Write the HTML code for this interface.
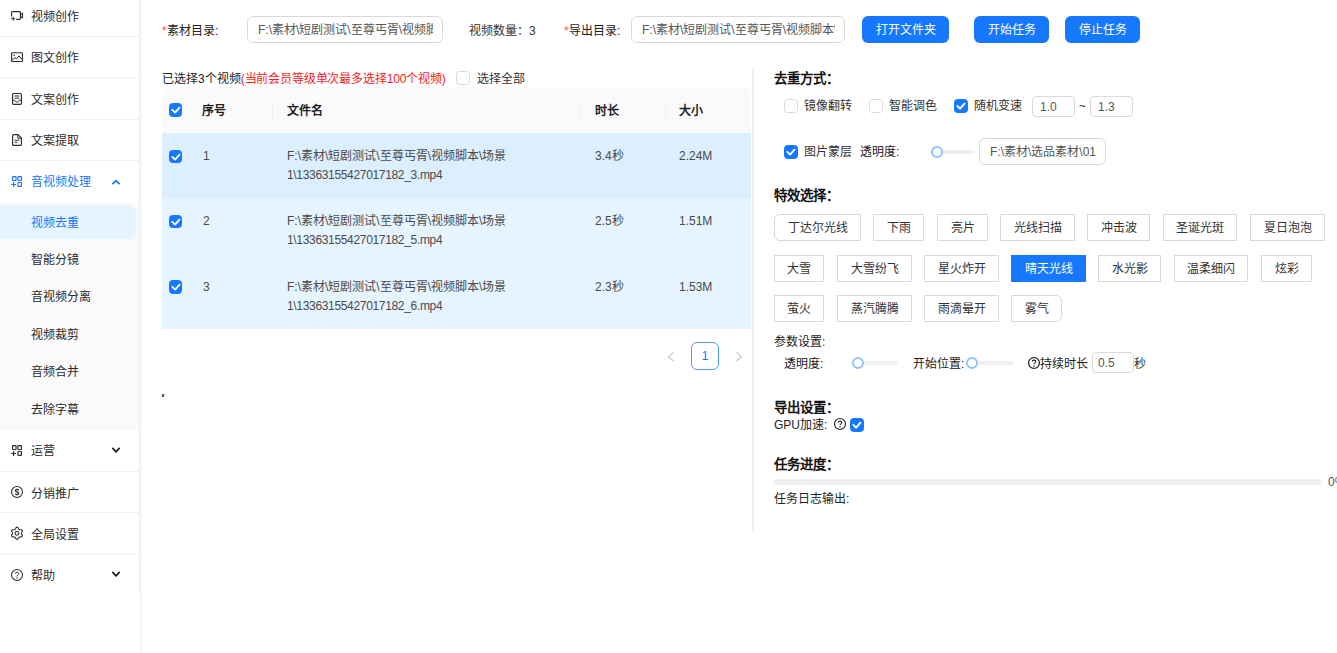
<!DOCTYPE html>
<html lang="zh-CN">
<head>
<meta charset="utf-8">
<title>视频去重</title>
<style>
*{box-sizing:border-box;margin:0;padding:0}
html,body{width:1337px;height:653px;overflow:hidden;background:#fff}
body{position:relative;font-family:"Liberation Sans",sans-serif;font-size:12px;color:#333;line-height:20px}
.a{position:absolute;white-space:nowrap}
/* sidebar */
#side{position:absolute;left:0;top:0;width:142px;height:653px;background:#fff;border-right:2px solid #f6f6f6}
#menu{position:absolute;left:0;top:0;width:140px;height:595px;border-right:1px solid #efefef}
.hl{position:absolute;left:0;width:139px;height:1px;background:#f0f0f0}
.mi{position:absolute;left:31px;height:20px;line-height:20px;font-size:12px;color:#2b2b2b;white-space:nowrap}
.ic{position:absolute;left:10px;width:14px;height:14px}
.sub{position:absolute;left:0;top:202px;width:139px;height:228px;background:#fafafa}
.sel{position:absolute;left:-8px;top:205px;width:144px;height:34px;border-radius:8px;background:#e6f4ff}
.blue{color:#1677ff}
/* inputs */
.inp{position:absolute;border:1px solid #d9d9d9;border-radius:6px;background:#fff;color:#555;font-size:12px;overflow:hidden;white-space:nowrap}
.clip{display:block;overflow:hidden;white-space:nowrap;height:100%}
.btn{position:absolute;background:#1677ff;color:#fff;border-radius:6px;text-align:center;font-size:12px;top:16px;height:27px;line-height:29px}
.cb{position:absolute;width:13.5px;height:13.5px;border:1px solid #d9d9d9;border-radius:3.5px;background:#fff}
.cb svg{position:absolute;left:-1px;top:-1px;width:13.5px;height:13.5px}
.cb.on{background:#1677ff;border-color:#1677ff}
.red{color:#ff1a1a}
/* table */
#thead{position:absolute;left:162px;top:87px;width:589px;height:46px;background:#fafafa;border-radius:8px 8px 0 0}
.row{position:absolute;left:162px;width:589px;background:#e6f4ff}
.th{position:absolute;top:101px;height:20px;line-height:20px;font-weight:bold;color:#1f1f1f;font-size:12px}
.vs{position:absolute;top:101px;width:1px;height:18px;background:#f0f0f0}
.td{position:absolute;height:19px;line-height:19px;color:#4a4a4a;font-size:12px;white-space:nowrap}
.h1{position:absolute;left:774px;font-family:"Liberation Serif",serif;font-weight:bold;font-size:13.4px;line-height:20px;color:#111;white-space:nowrap;height:20px}
.tb{position:absolute;border:1px solid #d9d9d9;background:#fff;height:27px;line-height:27px;text-align:center;font-size:12px;color:#333;white-space:nowrap}
.tb.on{background:#1677ff;border-color:#1677ff;color:#fff}
.lbl{position:absolute;height:20px;line-height:20px;font-size:12px;color:#1a1a1a;white-space:nowrap}
.rail{position:absolute;height:4px;border-radius:2px;background:#f0f0f0}
.knob{position:absolute;width:12px;height:12px;border-radius:50%;background:#fff;border:2px solid #8fc3ff}
</style>
</head>
<body>

<!-- ============ SIDEBAR ============ -->
<div id="side">
 <div id="menu">
  <div class="hl" style="top:36px"></div>
  <div class="hl" style="top:77px"></div>
  <div class="hl" style="top:119px"></div>
  <div class="hl" style="top:160px"></div>
  <div class="sub"></div>
  <div class="sel"></div>
  <div class="hl" style="top:471px"></div>
  <div class="hl" style="top:512px"></div>
  <div class="hl" style="top:554px"></div>


  <!-- icons -->
  <svg class="ic" style="top:9px" viewBox="0 0 14 14" fill="none" stroke="#2e2e2e" stroke-width="1.15"><path d="M1.6 7.6 V3.5 Q1.6 2.6 2.5 2.6 H9.5 Q10.4 2.6 10.4 3.5 V9.5 Q10.4 10.4 9.5 10.4 H6.2"/><path d="M3.2 7.8 V11.6 M1.3 9.7 H5.1" stroke-width="1"/><path d="M10.4 5.6 L12.5 4.4 V8.8 L10.4 7.6"/></svg>
  <svg class="ic" style="top:50px" viewBox="0 0 14 14" fill="none" stroke="#2e2e2e" stroke-width="1.15"><rect x="1.6" y="2.7" width="10.8" height="8.8" rx=".7"/><path d="M2 10.2 L5 7.6 L6.4 8.9 L9 5.9 L12 9.6" stroke-width="1"/><circle cx="4.2" cy="5.3" r=".8" fill="#2e2e2e" stroke="none"/></svg>
  <svg class="ic" style="top:92px" viewBox="0 0 14 14" fill="none" stroke="#2e2e2e" stroke-width="1.15"><rect x="2.6" y="1.5" width="8.8" height="10.8" rx="1"/><path d="M4.6 4 H9.4 M4.6 6.2 H9.4" stroke-width="1"/><path d="M2.6 8.3 H4.4 L7 10.4 L9.6 8.3 H11.4" stroke-width="1"/></svg>
  <svg class="ic" style="top:133px" viewBox="0 0 14 14" fill="none" stroke="#2e2e2e" stroke-width="1.15"><path d="M3.5 1.6 H8 L11.4 5 V11.4 Q11.4 12.4 10.4 12.4 H3.6 Q2.6 12.4 2.6 11.4 V2.6 Q2.6 1.6 3.5 1.6 Z"/><path d="M7.8 1.8 V5.2 H11.2" stroke-width="1"/><path d="M4.6 7.2 H9.4 M4.6 9.2 H7.2" stroke-width="1"/></svg>
  <svg class="ic" style="top:174px" viewBox="0 0 14 14" fill="none" stroke="#1677ff" stroke-width="1.15"><rect x="2.55" y="2.65" width="3.5" height="3.8" rx=".4"/><rect x="7.95" y="2.65" width="3.5" height="3.8" rx=".4"/><rect x="7.95" y="8.5" width="3.5" height="3.9" rx=".4"/><path d="M1.2 10.5 H6 M3.6 8 V13"/></svg>
  <svg class="ic" style="top:443px" viewBox="0 0 14 14" fill="none" stroke="#2e2e2e" stroke-width="1.15"><rect x="2.55" y="2.65" width="3.5" height="3.8" rx=".4"/><rect x="7.95" y="2.65" width="3.5" height="3.8" rx=".4"/><rect x="7.95" y="8.5" width="3.5" height="3.9" rx=".4"/><path d="M1.2 10.5 H6 M3.6 8 V13"/></svg>
  <svg class="ic" style="top:485px" viewBox="0 0 14 14" fill="none" stroke="#2e2e2e" stroke-width="1.1"><circle cx="7" cy="7" r="5.45"/><path d="M8.8 5.5 C8.6 4.1 5.4 4.1 5.4 5.7 C5.4 7.2 8.8 6.8 8.8 8.4 C8.8 9.9 5.4 9.9 5.2 8.5" stroke-width="1.25"/><path d="M7 3.6 V10.4" stroke-width=".5"/></svg>
  <svg class="ic" style="top:526px" viewBox="0 0 14 14" fill="none" stroke="#2e2e2e" stroke-width="1.05" stroke-linejoin="round"><path d="M6.22 1.35 L7.78 1.35 L8.72 3.14 L9.74 3.73 L11.76 3.65 L12.54 5.00 L11.46 6.71 L11.46 7.89 L12.54 9.60 L11.76 10.95 L9.74 10.87 L8.72 11.46 L7.78 13.25 L6.22 13.25 L5.28 11.46 L4.26 10.87 L2.24 10.95 L1.46 9.60 L2.54 7.89 L2.54 6.71 L1.46 5.00 L2.24 3.65 L4.26 3.73 L5.28 3.14 Z"/><circle cx="7" cy="7.3" r="1.9"/></svg>
  <svg class="ic" style="top:568px" viewBox="0 0 14 14" fill="none" stroke="#2e2e2e" stroke-width="1.1"><circle cx="7" cy="7" r="5.45"/><path d="M5.3 5.7 C5.3 3.7 8.7 3.7 8.7 5.7 C8.7 6.9 7 6.9 7 8.4" stroke-width="1"/><circle cx="7" cy="10" r=".7" fill="#2e2e2e" stroke="none"/></svg>
  <!-- chevrons -->
  <svg class="a" style="left:110px;top:176px" width="12" height="12" viewBox="0 0 12 12"><path d="M2.8 7.6 L6 4.7 L9.2 7.6" fill="none" stroke="#1677ff" stroke-width="1.7" stroke-linecap="round" stroke-linejoin="round"/></svg>
  <svg class="a" style="left:110px;top:444px" width="12" height="12" viewBox="0 0 12 12"><path d="M2.8 4.4 L6 7.8 L9.2 4.4" fill="none" stroke="#222" stroke-width="1.7" stroke-linecap="round" stroke-linejoin="round"/></svg>
  <svg class="a" style="left:110px;top:568px" width="12" height="12" viewBox="0 0 12 12"><path d="M2.8 4.4 L6 7.8 L9.2 4.4" fill="none" stroke="#222" stroke-width="1.7" stroke-linecap="round" stroke-linejoin="round"/></svg>
  <div class="mi" style="top:7px">视频创作</div>
  <div class="mi" style="top:48px">图文创作</div>
  <div class="mi" style="top:90px">文案创作</div>
  <div class="mi" style="top:131px">文案提取</div>
  <div class="mi blue" style="top:172px">音视频处理</div>
  <div class="mi blue" style="top:213px">视频去重</div>
  <div class="mi" style="top:250px">智能分镜</div>
  <div class="mi" style="top:287px">音视频分离</div>
  <div class="mi" style="top:325px">视频裁剪</div>
  <div class="mi" style="top:362px">音频合并</div>
  <div class="mi" style="top:400px">去除字幕</div>
  <div class="mi" style="top:441px">运营</div>
  <div class="mi" style="top:484px">分销推广</div>
  <div class="mi" style="top:525px">全局设置</div>
  <div class="mi" style="top:566px">帮助</div>
 </div>
</div>

<!-- ============ TOP BAR ============ -->
<div class="a" style="left:162px;top:21px;line-height:20px;color:#ff4d4f">*</div>
<div class="a" style="left:167px;top:21px;line-height:20px;color:#222">素材目录:</div>
<div class="inp" style="left:247px;top:16px;width:196px;height:27px;line-height:27px;padding:0 9px 0 10px"><span class="clip">F:\素材\短剧测试\至尊丐胥\视频脚本\场景1</span></div>
<div class="a" style="left:469px;top:21px;line-height:20px;color:#333">视频数量：3</div>
<div class="a" style="left:564px;top:21px;line-height:20px;color:#ff4d4f">*</div>
<div class="a" style="left:569px;top:21px;line-height:20px;color:#222">导出目录:</div>
<div class="inp" style="left:631px;top:16px;width:214px;height:27px;line-height:27px;padding:0 9px 0 10px"><span class="clip">F:\素材\短剧测试\至尊丐胥\视频脚本\场景1</span></div>
<div class="btn" style="left:862px;width:87px">打开文件夹</div>
<div class="btn" style="left:974px;width:75px">开始任务</div>
<div class="btn" style="left:1065px;width:75px">停止任务</div>

<!-- selection line -->
<div class="a" style="left:162px;top:69px;line-height:20px;color:#222">已选择3个视频<span class="red" style="letter-spacing:-0.15px">(当前会员等级单次最多选择100个视频)</span></div>
<div class="cb" style="left:456px;top:71px"></div>
<div class="a" style="left:477px;top:69px;line-height:20px;color:#333">选择全部</div>

<!-- ============ TABLE ============ -->
<div id="thead"></div>
<div class="row" style="top:133px;height:65px;background:#dcefff"></div>
<div class="row" style="top:198px;height:66px"></div>
<div class="row" style="top:264px;height:65px"></div>

<div class="cb on" style="left:168.5px;top:103px"><svg viewBox="0 0 13.5 13.5"><path d="M3.3 6.9 L6.1 9.6 L10.5 4.7" fill="none" stroke="#fff" stroke-width="1.9" stroke-linecap="round" stroke-linejoin="round"/></svg></div>
<div class="th" style="left:202px">序号</div>
<div class="vs" style="left:272px"></div>
<div class="th" style="left:287px">文件名</div>
<div class="vs" style="left:580px"></div>
<div class="th" style="left:595px">时长</div>
<div class="vs" style="left:665px"></div>
<div class="th" style="left:679px">大小</div>

<div class="cb on" style="left:168.5px;top:149.5px"><svg viewBox="0 0 13.5 13.5"><path d="M3.3 6.9 L6.1 9.6 L10.5 4.7" fill="none" stroke="#fff" stroke-width="1.9" stroke-linecap="round" stroke-linejoin="round"/></svg></div>
<div class="td" style="left:203px;top:147px">1</div>
<div class="td" style="left:287px;top:147px">F:\素材\短剧测试\至尊丐胥\视频脚本\场景</div>
<div class="td" style="left:287px;top:166px;letter-spacing:-0.33px">1\13363155427017182_3.mp4</div>
<div class="td" style="left:595px;top:147px">3.4秒</div>
<div class="td" style="left:679px;top:147px">2.24M</div>

<div class="cb on" style="left:168.5px;top:214.8px"><svg viewBox="0 0 13.5 13.5"><path d="M3.3 6.9 L6.1 9.6 L10.5 4.7" fill="none" stroke="#fff" stroke-width="1.9" stroke-linecap="round" stroke-linejoin="round"/></svg></div>
<div class="td" style="left:203px;top:212px">2</div>
<div class="td" style="left:287px;top:212px">F:\素材\短剧测试\至尊丐胥\视频脚本\场景</div>
<div class="td" style="left:287px;top:231px;letter-spacing:-0.33px">1\13363155427017182_5.mp4</div>
<div class="td" style="left:595px;top:212px">2.5秒</div>
<div class="td" style="left:679px;top:212px">1.51M</div>

<div class="cb on" style="left:168.5px;top:280px"><svg viewBox="0 0 13.5 13.5"><path d="M3.3 6.9 L6.1 9.6 L10.5 4.7" fill="none" stroke="#fff" stroke-width="1.9" stroke-linecap="round" stroke-linejoin="round"/></svg></div>
<div class="td" style="left:203px;top:278px">3</div>
<div class="td" style="left:287px;top:278px">F:\素材\短剧测试\至尊丐胥\视频脚本\场景</div>
<div class="td" style="left:287px;top:297px;letter-spacing:-0.33px">1\13363155427017182_6.mp4</div>
<div class="td" style="left:595px;top:278px">2.3秒</div>
<div class="td" style="left:679px;top:278px">1.53M</div>

<!-- pagination -->
<div class="a" style="left:691px;top:342px;width:28px;height:28px;border:1px solid #4d97ff;border-radius:6px;text-align:center;line-height:26px;color:#1677ff;font-size:12px">1</div>
<svg class="a" style="left:666px;top:350px" width="10" height="13" viewBox="0 0 10 13"><path d="M7.5 2.5 L2.5 6.7 L7.5 11" fill="none" stroke="#c4c4c4" stroke-width="1.1"/></svg>
<svg class="a" style="left:734px;top:350px" width="10" height="13" viewBox="0 0 10 13"><path d="M2.5 2.5 L7.5 6.7 L2.5 11" fill="none" stroke="#c4c4c4" stroke-width="1.1"/></svg>

<div class="a" style="left:162.2px;top:394px;width:1.7px;height:3.4px;background:#4a4a4a;transform:skewX(-14deg)"></div>

<!-- divider -->
<div class="a" style="left:752px;top:68px;width:2px;height:464px;background:#f0f0f0"></div>


<!-- ============ RIGHT PANEL ============ -->
<div class="h1" style="top:69px">去重方式：</div>
<div class="cb" style="left:784px;top:99px"></div>
<div class="lbl" style="left:804px;top:96px;color:#333">镜像翻转</div>
<div class="cb" style="left:869px;top:99px"></div>
<div class="lbl" style="left:889px;top:96px;color:#333">智能调色</div>
<div class="cb on" style="left:954px;top:99px"><svg viewBox="0 0 13.5 13.5"><path d="M3.3 6.9 L6.1 9.6 L10.5 4.7" fill="none" stroke="#fff" stroke-width="1.9" stroke-linecap="round" stroke-linejoin="round"/></svg></div>
<div class="lbl" style="left:974px;top:96px;color:#333">随机变速</div>
<div class="inp" style="left:1032px;top:96px;width:43px;height:21px;line-height:21px;padding-left:7px;border-radius:4px">1.0</div>
<div class="lbl" style="left:1079px;top:96px;color:#333">~</div>
<div class="inp" style="left:1090px;top:96px;width:43px;height:21px;line-height:21px;padding-left:7px;border-radius:4px">1.3</div>

<div class="cb on" style="left:784px;top:145px"><svg viewBox="0 0 13.5 13.5"><path d="M3.3 6.9 L6.1 9.6 L10.5 4.7" fill="none" stroke="#fff" stroke-width="1.9" stroke-linecap="round" stroke-linejoin="round"/></svg></div>
<div class="lbl" style="left:804px;top:142px;color:#333">图片蒙层</div>
<div class="lbl" style="left:860px;top:142px">透明度:</div>
<div class="rail" style="left:936px;top:150px;width:39px"></div>
<div class="knob" style="left:931px;top:146px"></div>
<div class="inp" style="left:979px;top:138px;width:127px;height:27px;line-height:27px;padding:0 9px 0 10px"><span class="clip">F:\素材\选品素材\01-</span></div>

<div class="h1" style="top:186px">特效选择：</div>
<!-- row 1 -->
<div class="tb" style="left:774px;top:214px;width:87px;border-radius:6px 0 0 6px">丁达尔光线</div>
<div class="tb" style="left:873px;top:214px;width:51px">下雨</div>
<div class="tb" style="left:937px;top:214px;width:51px">亮片</div>
<div class="tb" style="left:1000px;top:214px;width:75px">光线扫描</div>
<div class="tb" style="left:1087px;top:214px;width:63px">冲击波</div>
<div class="tb" style="left:1163px;top:214px;width:74px">圣诞光斑</div>
<div class="tb" style="left:1250px;top:214px;width:75px">夏日泡泡</div>
<!-- row 2 -->
<div class="tb" style="left:774px;top:255px;width:50px">大雪</div>
<div class="tb" style="left:837px;top:255px;width:75px">大雪纷飞</div>
<div class="tb" style="left:924px;top:255px;width:75px">星火炸开</div>
<div class="tb on" style="left:1011px;top:255px;width:75px">晴天光线</div>
<div class="tb" style="left:1098px;top:255px;width:63px">水光影</div>
<div class="tb" style="left:1174px;top:255px;width:74px">温柔细闪</div>
<div class="tb" style="left:1261px;top:255px;width:51px">炫彩</div>
<!-- row 3 -->
<div class="tb" style="left:774px;top:295px;width:50px">萤火</div>
<div class="tb" style="left:837px;top:295px;width:75px">蒸汽腾腾</div>
<div class="tb" style="left:924px;top:295px;width:75px">雨滴晕开</div>
<div class="tb" style="left:1011px;top:295px;width:51px;border-radius:0 6px 6px 0">雾气</div>

<div class="lbl" style="left:774px;top:332px">参数设置:</div>
<div class="lbl" style="left:784px;top:354px">透明度:</div>
<div class="rail" style="left:858px;top:361px;width:40px"></div>
<div class="knob" style="left:852px;top:357px"></div>
<div class="lbl" style="left:913px;top:354px">开始位置:</div>
<div class="rail" style="left:972px;top:361px;width:42px"></div>
<div class="knob" style="left:966px;top:357px"></div>
<svg class="a" style="left:1027px;top:356px" width="14" height="14" viewBox="0 0 14 14"><circle cx="7" cy="7" r="5.4" fill="none" stroke="#222" stroke-width="1.25"/><path d="M5.3 5.6 C5.3 3.6 8.8 3.6 8.8 5.6 C8.8 6.8 7 6.9 7 8.3" fill="none" stroke="#222" stroke-width="1.1"/><circle cx="7" cy="10" r="0.75" fill="#222"/></svg>
<div class="lbl" style="left:1040px;top:354px">持续时长</div>
<div class="inp" style="left:1092px;top:352px;width:42px;height:21px;line-height:21px;padding-left:5px;border-radius:4px">0.5</div>
<div class="lbl" style="left:1134px;top:354px;color:#333">秒</div>

<div class="h1" style="top:398px">导出设置：</div>
<div class="lbl" style="left:774px;top:415px;color:#222">GPU加速:</div>
<svg class="a" style="left:833px;top:417px" width="14" height="14" viewBox="0 0 14 14"><circle cx="7" cy="7" r="5.5" fill="none" stroke="#222" stroke-width="1.15"/><path d="M5.3 5.6 C5.3 3.6 8.8 3.6 8.8 5.6 C8.8 6.8 7 6.9 7 8.3" fill="none" stroke="#222" stroke-width="1.05"/><circle cx="7" cy="10" r="0.75" fill="#222"/></svg>
<div class="cb on" style="left:850px;top:418px"><svg viewBox="0 0 13.5 13.5"><path d="M3.3 6.9 L6.1 9.6 L10.5 4.7" fill="none" stroke="#fff" stroke-width="1.9" stroke-linecap="round" stroke-linejoin="round"/></svg></div>

<div class="h1" style="top:455px">任务进度：</div>
<div class="a" style="left:774px;top:479px;width:547px;height:6px;border-radius:3px;background:#efefef"></div>
<div class="lbl" style="left:1328px;top:472px;color:#555">0%</div>
<div class="lbl" style="left:774px;top:489px;color:#222">任务日志输出:</div>


</body>
</html>
